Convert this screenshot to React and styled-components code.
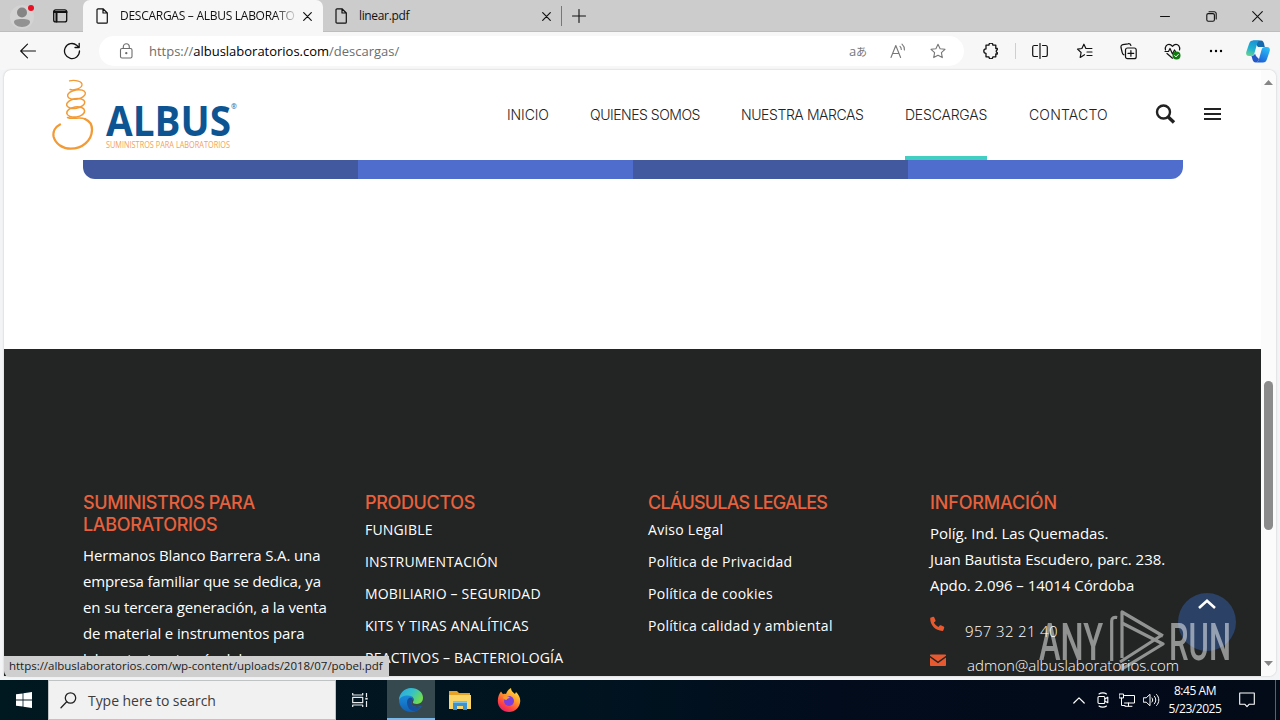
import styled, { createGlobalStyle } from "styled-components";

const GlobalStyle = createGlobalStyle`
  * {
    box-sizing: border-box;
  }
  body {
    margin: 0;
    overflow: hidden;
    font-family: "Open Sans", "Noto Sans CJK JP", sans-serif;
  }
  svg {
    display: block;
    flex-shrink: 0;
  }
  ul {
    list-style: none;
    margin: 0;
    padding: 0;
  }
`;

const Desktop = styled.div`
  position: relative;
  width: 1280px;
  height: 720px;
  display: flex;
  flex-direction: column;
  background-color: #f3f4f6;
  overflow: hidden;
`;

/* browser tabs */

const TabStrip = styled.div`
  height: 32px;
  display: flex;
  background-color: #cccccc;
  box-shadow: inset 0 -1px 0 #bdbdbd;
`;

const Profile = styled.div`
  width: 83px;
  display: flex;
  align-items: center;
  padding-left: 8px;
  gap: 14px;
`;

const Tab = styled.div`
  width: ${(props) => props.$width}px;
  display: flex;
  align-items: center;
  padding: 0 10px 0 ${(props) => (props.$active ? 13 : 12)}px;
  background-color: ${(props) => (props.$active ? "#f7f7f7" : "transparent")};
  border-radius: 7px 7px 0 0;
`;

const TabTitle = styled.span`
  flex: 1;
  margin-left: 12px;
  white-space: nowrap;
  font-size: 12px;
  line-height: 18px;
  letter-spacing: ${(props) => props.$spacing}px;
  color: #111;
  mask-image: ${(props) =>
    props.$fade ? "linear-gradient(90deg, #000 155px, rgba(0, 0, 0, 0.15) 175px)" : "none"};
`;

const TabDivider = styled.div`
  width: 1px;
  height: 20px;
  margin: 6px 9px 0 -2px;
  background-color: #777;
`;

const WindowButtons = styled.div`
  margin-left: auto;
  display: flex;
`;

const WindowButton = styled.div`
  width: 46px;
  display: flex;
  align-items: center;
  justify-content: center;
`;

/* address bar */

const Toolbar = styled.div`
  height: 38px;
  display: flex;
  align-items: center;
  padding-left: 6px;
  background-color: #f7f7f7;
`;

const IconSlot = styled.div`
  width: ${(props) => props.$width || 44}px;
  display: flex;
  justify-content: center;
  align-items: center;
`;

const AddressBar = styled.div`
  width: 865px;
  height: 30px;
  margin: 0 5px 0 5px;
  display: flex;
  align-items: center;
  padding: 0 6px 0 20px;
  border-radius: 15px;
  background-color: #fff;
`;

const Url = styled.span`
  flex: 1;
  margin-left: 15px;
  font-size: 13px;
  letter-spacing: -0.01px;
  color: #6d6d6d;
  b {
    font-weight: 400;
    color: #000;
  }
`;

const Translate = styled.span`
  font-size: 13px;
  line-height: 16px;
  color: #777;
  small {
    font-size: 11px;
  }
`;

const ToolDivider = styled.div`
  width: 1px;
  height: 16px;
  margin: 0 2px;
  background-color: #cfcfcf;
`;

/* web page */

const Viewport = styled.div`
  height: 606px;
  margin: 0 4px;
  display: flex;
  border-radius: 7px 7px 7px 0;
  overflow: hidden;
  background-color: #fff;
  box-shadow: 0 0 2px #bbb;
`;

const Page = styled.div`
  width: 1257px;
  display: flex;
  flex-direction: column;
`;

const SiteHeader = styled.header`
  height: 90px;
  display: flex;
  flex-shrink: 0;
  padding-left: 48px;
`;

const Nav = styled.nav`
  margin-left: 267px;
  display: flex;
  gap: 42px;
`;

const NavItem = styled.a`
  width: ${(props) => props.$width}px;
  display: flex;
  align-items: center;
  white-space: nowrap;
  font-family: Inter, sans-serif;
  font-weight: 300;
  font-size: 14px;
  letter-spacing: ${(props) => props.$spacing}px;
  color: #222;
  padding-bottom: 2px;
  border-top: 4px solid transparent;
  border-bottom: 4px solid ${(props) => (props.$active ? "#40cfc0" : "transparent")};
`;

const HeaderTools = styled.div`
  display: flex;
  align-items: center;
  margin-left: 47px;
  padding-bottom: 2px;
  gap: 28px;
`;

const Catalog = styled.div`
  width: 1100px;
  height: 19px;
  flex-shrink: 0;
  margin: 0 0 170px 79px;
  display: flex;
  border-radius: 0 0 12px 12px;
  overflow: hidden;
`;

const CatalogCell = styled.div`
  flex: 1;
  background-color: ${(props) => (props.$light ? "#4f6dcd" : "#43599f")};
`;

const Footer = styled.footer`
  flex: 1;
  min-height: 0;
  overflow: hidden;
  display: grid;
  grid-template-columns: 282px 283px 282px 282px;
  padding: 143px 0 0 79px;
  background-color: #222524;
  color: #fff;
`;

const Column = styled.section`
  white-space: nowrap;
`;

const ColumnTitle = styled.h4`
  margin: 0;
  font-family: Inter, sans-serif;
  font-weight: 500;
  font-size: 18px;
  line-height: 22px;
  letter-spacing: ${(props) => props.$spacing || 0}px;
  color: #e8613c;
`;

const Paragraph = styled.p`
  margin: 6px 0 0;
  font-size: 15px;
  line-height: 26px;
  letter-spacing: ${(props) => props.$spacing || 0}px;
`;

const FooterLink = styled.li`
  font-size: 14px;
  font-weight: 500;
  line-height: 32px;
  letter-spacing: ${(props) => props.$spacing || 0}px;
`;

const Contact = styled.div`
  display: flex;
  height: 34px;
  margin-top: ${(props) => props.$top}px;
  font-size: 15px;
  font-weight: 300;
  line-height: 30px;
  svg {
    margin-right: ${(props) => props.$gap}px;
  }
  span {
    letter-spacing: ${(props) => props.$spacing}px;
  }
`;

const Scrollbar = styled.div`
  width: 15px;
  display: flex;
  flex-direction: column;
  align-items: center;
  padding: 10px 0;
  background-color: #fbfbfb;
`;

const Thumb = styled.div`
  width: 9px;
  height: 149px;
  margin: 296px 0 auto;
  border-radius: 5px;
  background-color: #8b8b8b;
`;

/* things that float over the page */

const ToTop = styled.div`
  position: absolute;
  left: 1178px;
  top: 593px;
  width: 58px;
  height: 58px;
  padding-top: 6px;
  display: flex;
  justify-content: center;
  border-radius: 50%;
  background-color: #2b4166;
`;

const Watermark = styled.svg`
  position: absolute;
  left: 1036px;
  top: 606px;
`;

const StatusBubble = styled.div`
  position: absolute;
  left: 4px;
  top: 656px;
  width: 385px;
  height: 21px;
  padding-left: 5px;
  line-height: 20px;
  font-size: 11.5px;
  white-space: nowrap;
  letter-spacing: -0.02px;
  color: #1b1b1b;
  background-color: #cfcfcf;
  border-radius: 0 0 0 6px;
`;

/* taskbar */

const Taskbar = styled.div`
  height: 40px;
  margin-top: 4px;
  display: flex;
  background: linear-gradient(90deg, #001820 0%, #001420 45%, #020c1c 65%, #030a18 100%);
`;

const TaskSlot = styled.div`
  width: ${(props) => props.$width || 49}px;
  display: flex;
  align-items: center;
  justify-content: center;
  ${(props) =>
    props.$active &&
    `
    background-color: #35494f;
    border-top: 2px solid #35494f;
    border-bottom: 2px solid #76b9ed;
  `}
`;

const SearchBox = styled.div`
  width: 288px;
  display: flex;
  align-items: center;
  padding-left: 11px;
  gap: 11px;
  background-color: #f1f1f1;
  border: 1px solid #bfc3c4;
  font-size: 14px;
  letter-spacing: -0.05px;
  color: #3c3c3c;
`;

const Tray = styled.div`
  margin-left: auto;
  display: flex;
`;

const Clock = styled.div`
  width: 64px;
  padding-top: 2px;
  text-align: center;
  font-size: 12px;
  line-height: 18px;
  letter-spacing: -0.45px;
  color: #fff;
`;

const ShowDesktop = styled.div`
  width: 5px;
  margin-left: 8px;
  border-left: 1px solid #5a626d;
`;

const navItems = [
  { label: "INICIO", width: 41, spacing: -0.1 },
  { label: "QUIENES SOMOS", width: 109, spacing: -0.48 },
  { label: "NUESTRA MARCAS", width: 122, spacing: -0.42 },
  { label: "DESCARGAS", width: 82, spacing: -0.2, active: true },
  { label: "CONTACTO", width: 79, spacing: 0.17 },
];

const products = [
  "FUNGIBLE",
  "INSTRUMENTACIÓN",
  "MOBILIARIO – SEGURIDAD",
  "KITS Y TIRAS ANALÍTICAS",
  "REACTIVOS – BACTERIOLOGÍA",
];

const legal = [
  "Aviso Legal",
  "Política de Privacidad",
  "Política de cookies",
  "Política calidad y ambiental",
];

const Line = ({ size = 16, w = size, h = size, color = "#111", stroke = 1.1, children }) => (
  <svg
    width={w}
    height={h}
    viewBox={`0 0 ${w} ${h}`}
    fill="none"
    stroke={color}
    strokeWidth={stroke}
    strokeLinecap="round"
    strokeLinejoin="round"
  >
    {children}
  </svg>
);

const FileIcon = () => (
  <Line w={12} h={16} stroke={1.2}>
    <path d="M2 .8h5L11.3 5v9.2a1 1 0 0 1-1 1H2a1 1 0 0 1-1-1V1.8a1 1 0 0 1 1-1zM7 .8V5h4.3" />
  </Line>
);

const Cross = ({ size = 9, stroke = 1.2 }) => (
  <Line size={size} stroke={stroke}>
    <path d={`M.7 .7 ${size - 0.7} ${size - 0.7}M${size - 0.7} .7 .7 ${size - 0.7}`} />
  </Line>
);

const star = "M8 1.2l2.1 4.5 4.9.6-3.6 3.4.9 4.9L8 12.2l-4.3 2.4.9-4.9L1 6.3l4.9-.6z";

const Logo = () => (
  <svg width="188" height="90" viewBox="0 -10 188 90" fill="none">
    <g stroke="#f29a35" strokeLinecap="round">
      <path
        strokeWidth="2.3"
        d="M8 44.500C3 47 .6 52 1.700 57c2 7 9 11.700 17 11.700 11.500 0 21-8 21.300-18.700.2-5-2.500-9-7-11"
      />
      <path strokeWidth="1.500" d="M33 39c-5-2.500-13 .8-17.500-1.500" />
      <ellipse cx="23.700" cy="32" rx="9" ry="5" strokeWidth="1.600" transform="rotate(-8 23.700 32)" />
      <ellipse cx="23.700" cy="23.500" rx="9.200" ry="4.800" strokeWidth="1.500" transform="rotate(-10 23.700 23.500)" />
      <ellipse cx="24.500" cy="14.500" rx="9" ry="4.600" strokeWidth="1.400" transform="rotate(-10 24.500 14.500)" />
      <path strokeWidth="1.300" d="M17.500 .8c6-1 13 .5 12.500 4.200-.5 3.500-7 5.500-12 4.500" />
    </g>
    <text x="54" y="56" fontSize="42" fontWeight="700" fill="#0d5592" textLength="125" lengthAdjust="spacingAndGlyphs">
      ALBUS
    </text>
    <text x="179" y="29" fontSize="7" fontWeight="700" fill="#3f78a8">
      ®
    </text>
    <text x="54" y="68" fontSize="8.5" fill="#f3a255" textLength="124" lengthAdjust="spacingAndGlyphs">
      SUMINISTROS PARA LABORATORIOS
    </text>
  </svg>
);

const EdgeIcon = () => (
  <svg width="24" height="24" viewBox="0 0 24 24">
    <defs>
      <linearGradient id="edgeTop" x1="0" y1="0" x2="1" y2=".5">
        <stop offset="0" stopColor="#2ca6e0" />
        <stop offset=".55" stopColor="#35c1c8" />
        <stop offset="1" stopColor="#6fdc52" />
      </linearGradient>
      <linearGradient id="edgeBottom" x1="0" y1="0" x2="0" y2="1">
        <stop offset="0" stopColor="#1b8fdc" />
        <stop offset="1" stopColor="#1261b5" />
      </linearGradient>
    </defs>
    <path
      fill="url(#edgeBottom)"
      d="M0 12C0 7.500 4 6 8 6c5 0 7 4 5 6.500-1.500 3 .5 6.500 5 6.500 2 0 4-1 4.500-.5C20 22.500 16 24 12 24 5 24 0 18.500 0 12z"
    />
    <path fill="#174f9c" d="M8 14c0-3 2-4.500 4-4.500 2 1 1.500 2.500.8 3.500-1 3 1 6 5.200 6 2 0 3.500-.7 4.500-.5C20 21.500 17.500 23 15 23c-4 0-7-4-7-9z" />
    <path
      fill="url(#edgeTop)"
      d="M0 12C.3 5 5.500 0 12 0c7 0 12 4.500 12 9.800C24 14 21 16 18 16c-3 0-4.500-1-4-2 2-3 0-6.500-5-6.500-5 0-8 2-9 4.500z"
    />
  </svg>
);

const ExplorerIcon = () => (
  <svg width="22" height="19" viewBox="0 0 22 19">
    <path fill="#e6a326" d="M0 0h8l2 2h11v5H0z" />
    <path fill="#fbd565" d="M0 4h22v14H0z" />
    <path fill="#3b92cf" d="M4 10.500h14V19h-4v-4H8v4H4z" />
    <path fill="#7cc4ee" d="M4 10.500h14V12H4z" />
  </svg>
);

const FirefoxIcon = () => (
  <svg width="24" height="24" viewBox="0 0 24 24">
    <defs>
      <linearGradient id="fox" x1=".8" y1="0" x2=".2" y2="1">
        <stop offset="0" stopColor="#ffe94a" />
        <stop offset=".4" stopColor="#ff9a2b" />
        <stop offset=".7" stopColor="#ff4a3f" />
        <stop offset="1" stopColor="#e5176e" />
      </linearGradient>
    </defs>
    <path
      fill="url(#fox)"
      d="M4 3.500l2 2.700c1-.4 2-.5 3-.2C10 3 12 1 14 0c0 3 2 4 4 6l1-2c3 3 4.500 6 4.200 9.500C22.700 19.500 18 24 12 24S.8 19.500.8 13c0-4 1.200-7 3.200-9.500z"
    />
    <circle cx="12" cy="13" r="5" fill="#7b3fe0" />
    <path fill="#ff9a2b" d="M6 9c2-1.500 5-1 7 .5-1 .5-3 1-3.500 2.500C8 12 6 11 6 9z" />
  </svg>
);

const CopilotIcon = () => (
  <svg width="24" height="23" viewBox="0 0 24 23">
    <defs>
      <linearGradient id="pilotLeft" x1=".5" y1="0" x2=".2" y2="1">
        <stop offset="0" stopColor="#1795d8" />
        <stop offset=".55" stopColor="#22b3cf" />
        <stop offset="1" stopColor="#69d38a" />
      </linearGradient>
      <linearGradient id="pilotRight" x1=".8" y1="0" x2=".3" y2="1">
        <stop offset="0" stopColor="#2bc0f5" />
        <stop offset="1" stopColor="#1c5fd8" />
      </linearGradient>
    </defs>
    <path fill="#1769ad" d="M7 .5h8c2 0 2.500 1.500 3 3l.8 3.500H12z" />
    <path
      fill="url(#pilotLeft)"
      d="M7 .5h7c-2 .5-2.500 2-3 3.500L8.500 13c-.5 2-1.500 3-3.500 3H3c-2.500 0-3.300-2-2.700-4L3 4C3.700 1.500 5 .5 7 .5z"
    />
    <path
      fill="url(#pilotRight)"
      d="M17 22.500h-7c2-.5 2.500-2 3-3.500l2.500-9c.5-2 1.500-3 3.500-3h2c2.500 0 3.300 2 2.700 4L21 19c-.7 2.500-2 3.500-4 3.500z"
    />
    <path fill="#2458c9" d="M5.500 16c2 0 3-1 3.500-2.500L10 16l3 3c-.5 1.500-1 3-3 3.500-2.500 0-3-1.500-3.500-3z" />
  </svg>
);

function BrowserTabs() {
  return (
    <TabStrip>
      <Profile>
        <svg width="30" height="32" viewBox="0 0 30 32">
          <circle cx="14" cy="17" r="12" fill="#d3d3d3" />
          <circle cx="14" cy="12.500" r="5" fill="#858585" />
          <path fill="#929292" d="M6 22c0-2 2-3 8-3s8 1 8 3-3 5-8 5-8-3-8-5z" />
          <circle cx="23" cy="8" r="3" fill="#e81123" />
        </svg>
        <Line w={16} h={14} stroke={1.3}>
          <rect x="1.700" y=".9" width="13" height="12" rx="2" />
          <path d="M2 3h12.500M4.500 3v9.500" strokeWidth="2" />
        </Line>
      </Profile>
      <Tab $width={240} $active>
        <FileIcon />
        <TabTitle $fade $spacing={-0.27}>
          DESCARGAS – ALBUS LABORATO
        </TabTitle>
        <IconSlot $width={12}>
          <Cross />
        </IconSlot>
      </Tab>
      <Tab $width={240}>
        <FileIcon />
        <TabTitle $spacing={-0.35}>linear.pdf</TabTitle>
        <IconSlot $width={14}>
          <Cross />
        </IconSlot>
      </Tab>
      <TabDivider />
      <IconSlot $width={16}>
        <Line size={14}>
          <path d="M7 .5v13M.5 7h13" />
        </Line>
      </IconSlot>
      <WindowButtons>
        <WindowButton>
          <Line size={10} stroke={1}>
            <path d="M.5 5.500h9" />
          </Line>
        </WindowButton>
        <WindowButton>
          <Line size={11}>
            <rect x=".8" y="2.600" width="7.600" height="7.600" rx="1.500" />
            <path d="M3 .8h5.200a2 2 0 0 1 2 2V8" />
          </Line>
        </WindowButton>
        <WindowButton>
          <Cross size={11} stroke={1.1} />
        </WindowButton>
      </WindowButtons>
    </TabStrip>
  );
}

function AddressToolbar() {
  return (
    <Toolbar>
      <IconSlot>
        <Line size={16}>
          <path d="M15.500 8H.7M7.500 1.200.7 8l6.800 6.800" />
        </Line>
      </IconSlot>
      <IconSlot>
        <Line size={18} stroke={1.3}>
          <path d="M16.500 9A7.500 7.500 0 1 1 13.700 3.200L16 5.400M16.200 1.300v4.200H12" />
        </Line>
      </IconSlot>
      <AddressBar>
        <Line w={15} h={16} color="#6d6d6d">
          <rect x="1.500" y="5.500" width="11.500" height="9.500" rx="1.500" />
          <path d="M4.300 5.500V3.700a3 3 0 0 1 6 0v1.800" />
          <circle cx="7.300" cy="10.200" r=".6" fill="#6d6d6d" />
        </Line>
        <Url>
          https://<b>albuslaboratorios.com</b>/descargas/
        </Url>
        <IconSlot $width={40}>
          <Translate>
            a<small>あ</small>
          </Translate>
        </IconSlot>
        <IconSlot $width={40}>
          <Line size={16} color="#777">
            <path d="M1 14.500 5.800 2.500 10.600 14.500M2.600 10.500h6.400M10 3.300c1 .9 1.300 2 1.300 3.200M12 1.200c1.700 1.500 2.500 3.500 2.400 5.800" />
          </Line>
        </IconSlot>
        <IconSlot $width={40}>
          <Line size={16} color="#777">
            <path d={star} />
          </Line>
        </IconSlot>
      </AddressBar>
      <IconSlot>
        <Line size={16} stroke={1.3}>
          <path d="M3 2.200h2.900a2 2 0 0 1 4 0h2.900v3.300h1.500v1.300a1.500 1.500 0 0 0 0 2.900v1.300h-1.500v2.800H9.900a2 2 0 0 1-4 0H3V10.300a2.200 2.200 0 0 1 0-4.400z" />
        </Line>
      </IconSlot>
      <ToolDivider />
      <IconSlot>
        <Line size={16} stroke={1.2}>
          <path d="M8 .5v15M5.500 2.500H2A1.500 1.500 0 0 0 .7 4v8A1.500 1.500 0 0 0 2 13.500h3.500M10.500 2.500H14A1.500 1.500 0 0 1 15.300 4v8a1.500 1.500 0 0 1-1.300 1.500h-3.500" />
        </Line>
      </IconSlot>
      <IconSlot>
        <Line w={17} h={16} stroke={1.2}>
          <path d="M8.500 11.700l-4.300 2.700.9-4.900L1.500 6.100l4.400-.6 2-4.300 2 4.300h6M11 9h5M11 12.500h5" />
        </Line>
      </IconSlot>
      <IconSlot>
        <Line size={17} stroke={1.2}>
          <path d="M4 11.800A2.500 2.500 0 0 1 2.200 9.500L1 4.500A2.500 2.500 0 0 1 2.800 1.600L8 .8a2.500 2.500 0 0 1 2.900 1.700" />
          <rect x="5.500" y="5" width="10.700" height="10.700" rx="2" />
          <path d="M10.900 7.500v5.700M8 10.400h5.700" />
        </Line>
      </IconSlot>
      <IconSlot>
        <Line w={17} h={17} stroke={1.2}>
          <path d="M1.500 7C.5 3.500 3 1.300 5 1.300c1.500 0 2.500.7 3.500 2 1-1.300 2-2 3.500-2 2 0 4.500 2.200 3.500 5.700M1 8.500h3.500L6 5.500l2.500 5.500L10.500 7l1 1.500M3 10.500l5.500 4.700" />
          <circle cx="12.500" cy="12.500" r="4" fill="#107c10" stroke="none" />
          <path d="M10.700 12.600l1.300 1.300 2.300-2.500" stroke="#fff" strokeWidth="1" />
        </Line>
      </IconSlot>
      <IconSlot>
        <svg width="14" height="4" viewBox="0 0 14 4">
          <circle cx="2" cy="2" r="1.200" />
          <circle cx="7" cy="2" r="1.200" />
          <circle cx="12" cy="2" r="1.200" />
        </svg>
      </IconSlot>
      <IconSlot $width={40}>
        <CopilotIcon />
      </IconSlot>
    </Toolbar>
  );
}

function SiteFooter() {
  return (
    <Footer>
      <Column>
        <ColumnTitle $spacing={-0.35}>
          SUMINISTROS PARA
          <br />
          LABORATORIOS
        </ColumnTitle>
        <Paragraph $spacing={-0.13}>
          Hermanos Blanco Barrera S.A. una
          <br />
          empresa familiar que se dedica, ya
          <br />
          en su tercera generación, a la venta
          <br />
          de material e instrumentos para
          <br />
          laboratorio a través del
        </Paragraph>
      </Column>
      <Column>
        <ColumnTitle $spacing={-0.35}>PRODUCTOS</ColumnTitle>
        <ul>
          {products.map((name) => (
            <FooterLink key={name} $spacing={0.18}>
              {name}
            </FooterLink>
          ))}
        </ul>
      </Column>
      <Column>
        <ColumnTitle $spacing={-0.8}>CLÁUSULAS LEGALES</ColumnTitle>
        <ul>
          {legal.map((name) => (
            <FooterLink key={name} $spacing={0.28}>
              {name}
            </FooterLink>
          ))}
        </ul>
      </Column>
      <Column>
        <ColumnTitle $spacing={-0.15}>INFORMACIÓN</ColumnTitle>
        <Paragraph $spacing={-0.04}>
          Políg. Ind. Las Quemadas.
          <br />
          Juan Bautista Escudero, parc. 238.
          <br />
          Apdo. 2.096 – 14014 Córdoba
        </Paragraph>
        <Contact $top={18} $gap={20} $spacing={0.35}>
          <svg width="15" height="16" viewBox="0 0 15 16">
            <path
              fill="#e8592f"
              d="M1 1.500 3 .8c.6-.2 1 0 1.300.6l1.200 2.800c.2.500.1.900-.3 1.200L3.900 6.600c1 2 2.400 3.400 4.500 4.500l1.300-1.500c.3-.4.8-.5 1.200-.3l2.700 1.200c.6.300.8.700.6 1.300l-.7 2.200c-.2.600-.5.900-1.100.9C5.500 14.900.2 9.300.2 2.600c0-.6.300-1 .8-1.100z"
            />
          </svg>
          <span>957 32 21 40</span>
        </Contact>
        <Contact $top={0} $gap={21} $spacing={0.02}>
          <svg width="16" height="18" viewBox="0 0 16 18">
            <path fill="#e8592f" d="M0 5.500c0-.6.500-1 1-1h14c.6 0 1 .4 1 1v.3l-8 5.700L0 5.800zM0 7.500l8 5.700 8-5.700V15c0 .600-.5 1-1 1H1c-.6 0-1-.4-1-1z" />
          </svg>
          <span>admon@albuslaboratorios.com</span>
        </Contact>
      </Column>
    </Footer>
  );
}

function WindowsTaskbar() {
  return (
    <Taskbar>
      <TaskSlot $width={48}>
        <svg width="16" height="16" viewBox="0 0 16 16">
          <path fill="#fff" d="M0 2.300 6.600 1.400v6.200H0zM7.400 1.300 16 0v7.600H7.400zM0 8.400h6.600v6.200L0 13.700zM7.400 8.400H16V16l-8.600-1.300z" />
        </svg>
      </TaskSlot>
      <SearchBox>
        <Line size={17} color="#222" stroke={1.3}>
          <circle cx="10.500" cy="6" r="5.200" />
          <path d="M6.700 9.800 1 15.700" />
        </Line>
        Type here to search
      </SearchBox>
      <TaskSlot $width={51}>
        <Line w={19} h={16} color="#e8ecee" stroke={1.2}>
          <path d="M.7 1v2h10V1M.7 15v-2h10v2M.7 5.300h10v5.400H.7zM14.500 1v4M14.500 9v6" strokeLinecap="butt" />
          <path d="M14.500 5.800v1.800" strokeWidth="2.400" strokeLinecap="butt" />
        </Line>
      </TaskSlot>
      <TaskSlot $width={48} $active>
        <EdgeIcon />
      </TaskSlot>
      <TaskSlot>
        <ExplorerIcon />
      </TaskSlot>
      <TaskSlot>
        <FirefoxIcon />
      </TaskSlot>
      <Tray>
        <TaskSlot $width={24}>
          <Line w={12} h={7} color="#fff" stroke={1.2}>
            <path d="M.8 6 6 .9 11.200 6" />
          </Line>
        </TaskSlot>
        <TaskSlot $width={24}>
          <Line w={12} h={16} color="#fff" stroke={1.1}>
            <rect x="1" y="4.500" width="6.800" height="7" rx="1" />
            <path d="M7.800 7l3-1.800v5.600l-3-1.800M2 2c2-1.500 5.500-1.500 7.500 0M2 14c2 1.500 5.500 1.500 7.500 0" />
          </Line>
        </TaskSlot>
        <TaskSlot $width={24}>
          <Line w={16} h={14} color="#fff" stroke={1}>
            <path d="M5.500 2.500h10v7.500h-10M9.500 10v3M6 13.300h7M.5 1h4v4h-4zM2.500 5v7.500H6" />
          </Line>
        </TaskSlot>
        <TaskSlot $width={24}>
          <Line w={17} h={14} color="#fff" stroke={1}>
            <path d="M.7 4.800h2.500L7 1.300v11.400L3.200 9.200H.7zM9 5c1 1.200 1 2.800 0 4M11.300 3.200c2 2.300 2 5.300 0 7.600M13.600 1.500c3 3.300 3 7.700 0 11" />
          </Line>
        </TaskSlot>
        <Clock>
          8:45 AM
          <br />
          5/23/2025
        </Clock>
        <TaskSlot $width={40}>
          <Line w={16} h={16} color="#fff" stroke={1.1}>
            <path d="M.7 1h14.600v11.200H10.300L8 14.700l-2.300-2.500h-5z" />
          </Line>
        </TaskSlot>
        <ShowDesktop />
      </Tray>
    </Taskbar>
  );
}

function App() {
  return (
    <Desktop>
      <GlobalStyle />
      <BrowserTabs />
      <AddressToolbar />
      <Viewport>
        <Page>
          <SiteHeader>
            <Logo />
            <Nav>
              {navItems.map((item) => (
                <NavItem key={item.label} $width={item.width} $spacing={item.spacing} $active={item.active}>
                  {item.label}
                </NavItem>
              ))}
            </Nav>
            <HeaderTools>
              <svg width="21" height="20" viewBox="0 0 21 20" fill="none" stroke="#222">
                <circle cx="8.500" cy="8" r="6.500" strokeWidth="2.400" />
                <path d="M13 12.800l6 5.700" strokeWidth="3.400" />
              </svg>
              <svg width="17" height="12" viewBox="0 0 17 12" fill="#222">
                <path d="M0 0h17v2H0zM0 5h17v2H0zM0 10h17v2H0z" />
              </svg>
            </HeaderTools>
          </SiteHeader>
          <Catalog>
            <CatalogCell />
            <CatalogCell $light />
            <CatalogCell />
            <CatalogCell $light />
          </Catalog>
          <SiteFooter />
        </Page>
        <Scrollbar>
          <svg width="9" height="5" viewBox="0 0 9 5">
            <path fill="#858585" d="M0 5 4.500 0 9 5z" />
          </svg>
          <Thumb />
          <svg width="9" height="5" viewBox="0 0 9 5">
            <path fill="#858585" d="M0 0h9L4.500 5z" />
          </svg>
        </Scrollbar>
      </Viewport>
      <WindowsTaskbar />
      <ToTop>
        <svg width="18" height="10" viewBox="0 0 18 10" fill="none" stroke="#fff" strokeWidth="2.600">
          <path d="M1 9 9 1.800 17 9" />
        </svg>
      </ToTop>
      <Watermark width="200" height="68" viewBox="0 0 200 68" fill="none" opacity="0.5">
        <g fill="#fff" fontFamily="Roboto, sans-serif" fontWeight="500" fontSize="52">
          <text x="3" y="53.500" textLength="64" lengthAdjust="spacingAndGlyphs">
            ANY
          </text>
          <text x="133" y="53.500" textLength="62" lengthAdjust="spacingAndGlyphs">
            RUN
          </text>
        </g>
        <path
          stroke="#fff"
          strokeWidth="3.200"
          strokeLinejoin="round"
          d="M75.700 55V15c0-3 2-4 5.500-3.500M127 30 86 6v46M86 17l41 21-41 25v-5M126 29 84 56"
        />
      </Watermark>
      <StatusBubble>https://albuslaboratorios.com/wp-content/uploads/2018/07/pobel.pdf</StatusBubble>
    </Desktop>
  );
}

export default App;
